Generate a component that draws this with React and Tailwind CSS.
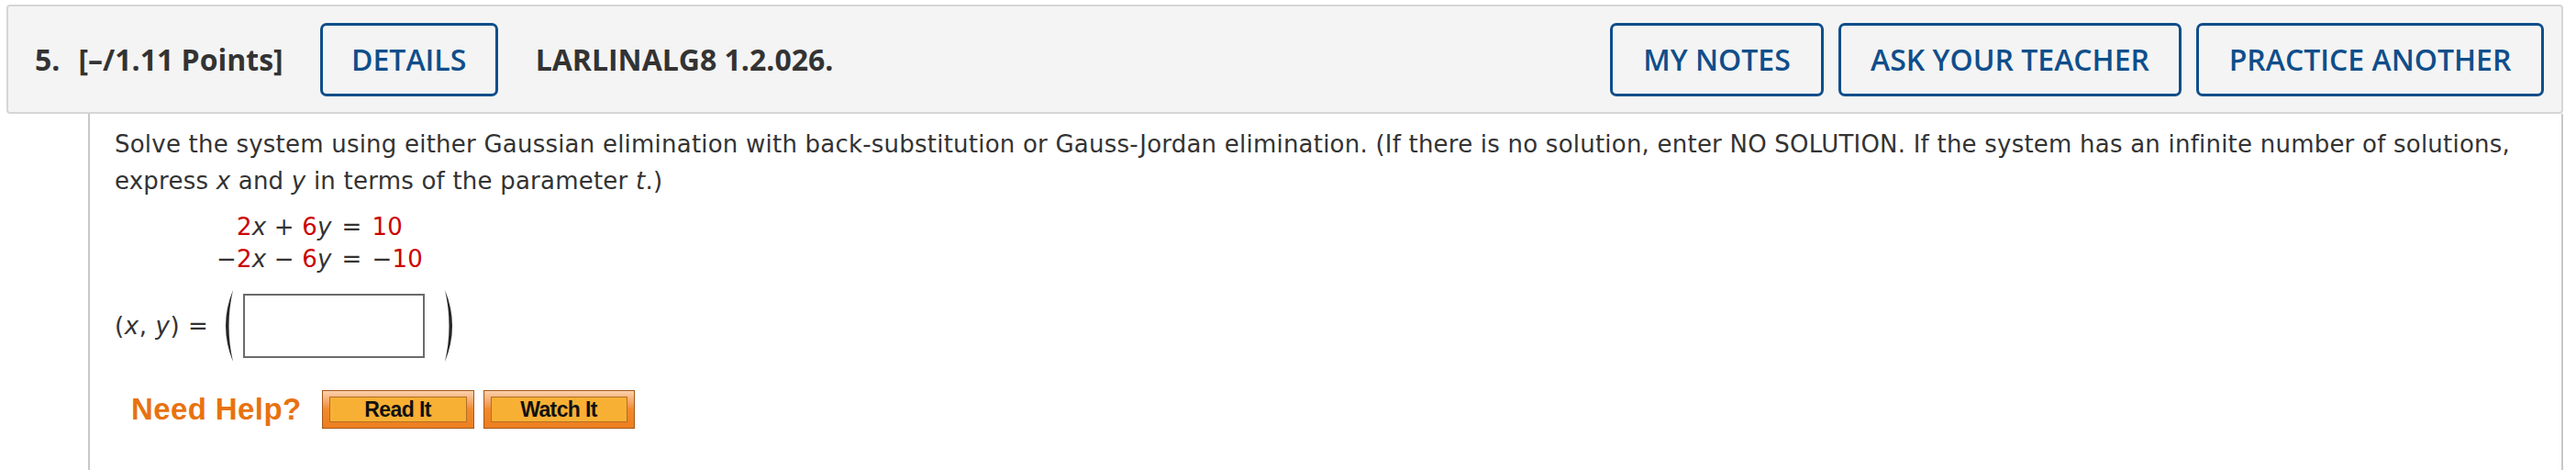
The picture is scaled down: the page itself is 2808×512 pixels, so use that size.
const NavButton = ({ label, width, className = "" }) => {
  return (
    <button
      className={`${width} ${className} h-[80px] shrink-0 rounded-[7px] border-[3px] border-[#0f4e8a] text-[32px] font-semibold text-[#0f4e8a]`}
    >
      {label}
    </button>
  );
};

const HelpButton = ({ label, width }) => {
  return (
    <div
      className={`${width} h-[42px] border border-[#a3581b] bg-gradient-to-b from-[#fbd0aa] via-[#f08a2b] to-[#ee7e1f] p-[6px_7px]`}
    >
      <div className="flex h-full items-center justify-center border border-[#b36f24] bg-[#f8b034] font-['Liberation_Sans',Arial,sans-serif] text-[23px] font-bold tracking-[-0.6px] text-[#111]">
        {label}
      </div>
    </div>
  );
};

const Paren = ({ flip, className = "" }) => {
  return (
    <svg width="17" height="80" viewBox="0 0 17 80" className={className}>
      {flip ? (
        <path d="M2 1 Q18 40 2 79 Q11 40 2 1 Z" fill="#262626" />
      ) : (
        <path d="M15 1 Q-1 40 15 79 Q6 40 15 1 Z" fill="#262626" />
      )}
    </svg>
  );
};

const App = () => {
  return (
    <div className="flex h-[512px] w-[2808px] flex-col overflow-hidden bg-white pl-[7px] pr-[14px] pt-[5px]">
      {/* question header */}
      <div className="flex h-[119px] shrink-0 items-center rounded-[4px] border-2 border-[#d6d6d6] bg-[#f4f4f4] pl-[29px] pr-[19px] font-['Open_Sans',sans-serif] text-[32px] text-[#333]">
        <span className="font-bold">5.</span>
        <span className="ml-[20px] font-bold">[–/1.11 Points]</span>
        <NavButton label="DETAILS" width="w-[194px]" className="ml-[40px]" />
        <span className="ml-[41px] font-bold">LARLINALG8 1.2.026.</span>
        <div className="ml-auto flex gap-[16px]">
          <NavButton label="MY NOTES" width="w-[233px]" />
          <NavButton label="ASK YOUR TEACHER" width="w-[374px]" />
          <NavButton label="PRACTICE ANOTHER" width="w-[379px]" />
        </div>
      </div>

      {/* question body */}
      <div className="ml-[89px] flex-1 border-x-2 border-[#c8c8c8] pl-[27px] pt-[13px] font-['DejaVu_Sans',Verdana,sans-serif] text-[26px] text-[#333]">
        <p className="w-[2650px] leading-[40px] tracking-[0.22px]">
          Solve the system using either Gaussian elimination with back-substitution or Gauss-Jordan elimination. (If there is no
          solution, enter NO SOLUTION. If the system has an infinite number of solutions, express <i>x</i> and <i>y</i> in
          terms of the parameter <i>t</i>.)
        </p>

        <div className="ml-[111px] mt-[13px] grid w-max grid-cols-[auto_auto_auto] gap-x-[11px] leading-[35px] tracking-[0.2px]">
          <span className="justify-self-end">
            <span className="text-[#cc0000]">2</span>
            <i>x</i> + <span className="text-[#cc0000]">6</span>
            <i>y</i>
          </span>
          <span>=</span>
          <span className="text-[#cc0000]">10</span>
          <span className="justify-self-end">
            −<span className="text-[#cc0000]">2</span>
            <i>x</i> − <span className="text-[#cc0000]">6</span>
            <i>y</i>
          </span>
          <span>=</span>
          <span>
            −<span className="text-[#cc0000]">10</span>
          </span>
        </div>

        <div className="mt-[17px] flex h-[76px] items-center">
          <span className="tracking-[0.6px]">
            (<i>x</i>, <i>y</i>) =
          </span>
          <Paren className="ml-[12px]" />
          <input
            type="text"
            className="ml-[9px] h-[70px] w-[198px] border-2 border-[#6b6b6b] bg-white outline-none"
          />
          <Paren flip className="ml-[20px]" />
        </div>

        <div className="mt-[32px] flex h-[42px] items-center">
          <span className="ml-[18px] font-['Liberation_Sans',Arial,sans-serif] text-[33px] font-bold tracking-[0.4px] text-[#e8720f]">
            Need Help?
          </span>
          <div className="ml-[22px] flex gap-[10px]">
            <HelpButton label="Read It" width="w-[166px]" />
            <HelpButton label="Watch It" width="w-[165px]" />
          </div>
        </div>
      </div>
    </div>
  );
};

export default App;
